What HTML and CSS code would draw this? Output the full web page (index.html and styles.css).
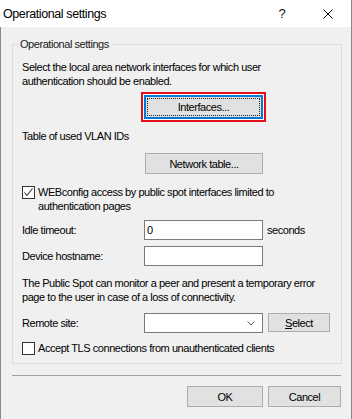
FILE: index.html
```html
<!DOCTYPE html>
<html lang="en">
<head>
    <meta charset="UTF-8">
    <meta name="viewport" content="width=device-width, initial-scale=1.0">
    <title>Operational settings</title>
    <link rel="stylesheet" href="styles.css">
</head>
<body>
    <div class="window">
        <div class="titlebar">
            <span class="title">Operational settings</span>
            <span class="caption-btn help">?</span>
            <span class="caption-btn close">
                <svg width="10" height="10" viewBox="0 0 10 10"><path d="M0.5 0.5 L9.5 9.5 M9.5 0.5 L0.5 9.5" stroke="#000" stroke-width="1" fill="none"/></svg>
            </span>
        </div>

        <div class="dialog-body">
            <div class="group">
                <div class="group-title">Operational settings</div>

                <p class="text first">Select the local area network interfaces for which user<br>authentication should be enabled.</p>

                <div class="highlight">
                    <div class="btn btn-default">Interfaces...</div>
                </div>

                <p class="text vlan">Table of used VLAN IDs</p>
                <div class="btn btn-table">Network table...</div>

                <div class="check webconfig">
                    <span class="box">
                        <svg width="11" height="11" viewBox="0 0 11 11"><path d="M1.5 5.5 L4 8.5 L9.5 1.5" stroke="#333" stroke-width="1.1" fill="none"/></svg>
                    </span>
                    <span>WEBconfig access by public spot interfaces limited to<br>authentication pages</span>
                </div>

                <div class="field idle">
                    <span class="field-label">Idle timeout:</span>
                    <div class="input">0</div>
                    <span class="unit">seconds</span>
                </div>

                <div class="field hostname">
                    <span class="field-label">Device hostname:</span>
                    <div class="input"></div>
                </div>

                <p class="text monitor">The Public Spot can monitor a peer and present a temporary error<br>page to the user in case of a loss of connectivity.</p>

                <div class="field remote">
                    <span class="field-label">Remote site:</span>
                    <div class="input combo">
                        <svg width="8" height="5" viewBox="0 0 8 5"><path d="M0.5 0.5 L4 4 L7.5 0.5" stroke="#555" stroke-width="1" fill="none"/></svg>
                    </div>
                    <div class="btn btn-select"><u>S</u>elect</div>
                </div>

                <div class="check tls">
                    <span class="box"></span>
                    <span>Accept TLS connections from unauthenticated clients</span>
                </div>
            </div>

            <div class="separator"></div>

            <div class="actions">
                <div class="btn btn-ok">OK</div>
                <div class="btn btn-cancel">Cancel</div>
            </div>
        </div>
    </div>
</body>
</html>
```

FILE: styles.css
```css
body {
    margin: 0;
    padding: 0;
    font-family: "Liberation Sans", Arial, sans-serif;
    font-size: 11px;
    letter-spacing: -0.45px;
    color: #000;
    background-color: #f0f0f0;
}

.window {
    width: 352px;
    height: 419px;
    box-sizing: border-box;
    border-right: 1px solid #888;
    background-color: #f0f0f0;
}

.titlebar {
    display: flex;
    align-items: center;
    height: 27px;
    background-color: #fff;
}

.title {
    padding-left: 3px;
    font-size: 12.5px;
    letter-spacing: -0.4px;
    flex: 1;
}

.caption-btn {
    width: 46px;
    height: 27px;
    display: flex;
    align-items: center;
    justify-content: center;
}

.help {
    font-size: 13px;
    letter-spacing: 0;
    color: #111;
}

.dialog-body {
    border-left: 1px solid #8a8a8a;
    height: 392px;
    padding-top: 17px;
    box-sizing: border-box;
}

.group {
    margin: 0 9px 0 11px;
    border: 1px solid #dcdcdc;
    padding: 0 9px 8px 9px;
}

.group-title {
    display: table;
    margin: -8px 0 0 -3px;
    padding: 0 3px 0 1px;
    line-height: 14px;
    background-color: #f0f0f0;
    color: #1a1a1a;
}

.text {
    margin: 0;
    line-height: 14px;
}

.text.first {
    margin-top: 9px;
}

.highlight {
    display: table;
    margin: 4px 0 0 119px;
    border: 2px solid #e2101a;
    padding: 1px;
    background-color: #fff;
}

.btn {
    display: flex;
    align-items: center;
    justify-content: center;
    height: 21px;
    box-sizing: border-box;
    background-color: #e1e1e1;
    border: 1px solid #adadad;
    line-height: 14px;
}

.btn-default {
    width: 119px;
    height: 24px;
    border: 2px solid #0078d7;
    outline: 1px dotted #222;
    outline-offset: -4px;
}

.text.vlan {
    margin-top: 7px;
}

.btn-table {
    width: 118px;
    margin: 10px 0 0 123px;
}

.check {
    display: flex;
    align-items: flex-start;
    line-height: 14px;
}

.check .box {
    width: 13px;
    height: 13px;
    box-sizing: border-box;
    border: 1px solid #333;
    background-color: #fff;
    margin: 1px 3px 0 0;
    display: flex;
    align-items: center;
    justify-content: center;
    flex-shrink: 0;
}

.webconfig {
    margin-top: 11px;
}

.field {
    display: flex;
    align-items: center;
    line-height: 14px;
}

.field-label {
    width: 122px;
    flex-shrink: 0;
}

.input {
    width: 119px;
    height: 20px;
    box-sizing: border-box;
    border: 1px solid #7a7a7a;
    background-color: #fff;
    padding-left: 2px;
    display: flex;
    align-items: center;
}

.unit {
    margin-left: 4px;
}

.idle {
    margin-top: 7px;
}

.hostname {
    margin-top: 6px;
}

.text.monitor {
    margin-top: 10px;
}

.remote {
    margin-top: 9px;
    align-items: flex-start;
}

.remote .field-label {
    line-height: 20px;
}

.combo {
    justify-content: flex-end;
    padding-right: 7px;
}

.btn-select {
    width: 62px;
    height: 19px;
    margin-left: 5px;
}

.tls {
    margin-top: 8px;
}

.separator {
    margin: 11px 10px 0 11px;
    border-top: 1px solid #a0a0a0;
}

.actions {
    display: flex;
    justify-content: flex-end;
    gap: 5px;
    margin-top: 10px;
    padding-right: 10px;
}

.btn-ok {
    width: 76px;
}

.btn-cancel {
    width: 73px;
}
```
